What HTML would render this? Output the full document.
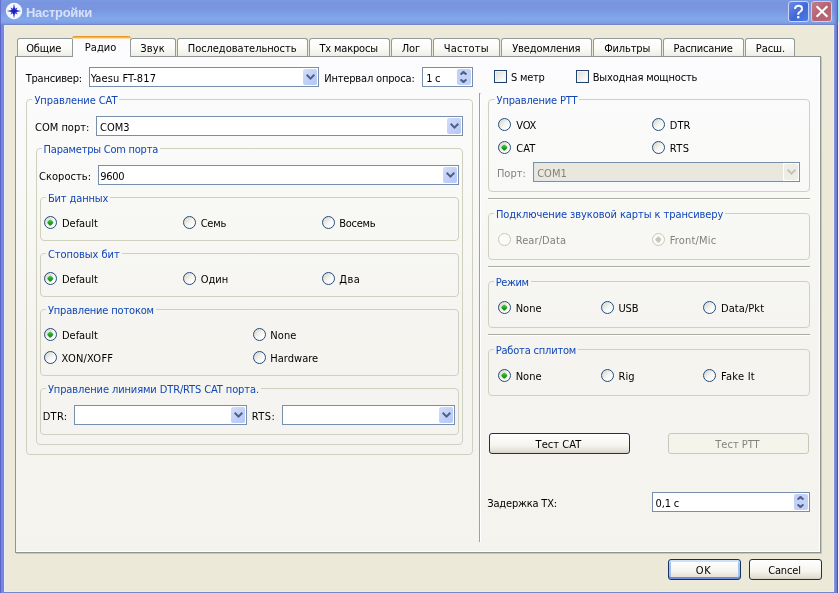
<!DOCTYPE html>
<html lang="ru"><head><meta charset="utf-8"><title>Настройки</title>
<style>
*{box-sizing:border-box;margin:0;padding:0}
html,body{width:839px;height:593px;overflow:hidden;background:#ece9d8}
body{position:relative;font-family:"DejaVu Sans Condensed", "Liberation Sans", sans-serif;font-size:11px;color:#000;line-height:13px}
.win{position:absolute;left:0;top:0;width:839px;height:593px;overflow:hidden;will-change:transform}
.a{position:absolute}
.t{position:absolute;white-space:nowrap;height:13px;line-height:13px}
.b{color:#1046b8;background:#f7f6f2;padding:0 2px}
.d{color:#83827b}
.title{position:absolute;left:0;top:0;width:838px;height:26px;background:linear-gradient(#7c9be3 0,#7995df 2px,#7a96e0 10px,#7e9fe6 14px,#82a8ea 19px,#80a2e8 22px,#7c98e0 23.5px,#7588c8 24px,#7588c8 25px,#e6eaf6 25px,#e6eaf6 26px)}
.title .cap{position:absolute;left:26px;top:5px;font:bold 13px 'Liberation Sans',sans-serif;color:#d8e1f7;line-height:16px;letter-spacing:-0.3px}
.lb{position:absolute;left:0;top:25px;width:5px;height:568px;background:linear-gradient(90deg,#5a64c8 0,#5a64c8 1px,#7284de 1px,#7789e2 3px,#7a8acc 3px,#7a8acc 4px,#e9ecf7 4px,#e9ecf7 5px)}
.rb{position:absolute;left:833px;top:25px;width:5px;height:568px;background:linear-gradient(90deg,#e9ecf7 0,#e9ecf7 1px,#8795da 1px,#8795da 2px,#7888e0 2px,#6c79d8 4px,#4a52a8 4px,#4a52a8 5px)}
.bb{position:absolute;left:1px;top:591px;width:836px;height:2px;background:linear-gradient(#e9ecf7 0,#e9ecf7 1px,#7686c8 1px,#7686c8 2px);border-left:3px solid #7789e2;border-right:3px solid #7280dc}
.e0{position:absolute;left:0;top:0;width:1px;height:25px;background:#6470d0}
.e1{position:absolute;left:833px;top:0;width:5px;height:25px;background:linear-gradient(90deg,rgba(106,112,208,0),rgba(106,112,208,.8) 80%,#5a64bc 80%)}
.edge{position:absolute;left:838px;top:0;width:1px;height:593px;background:linear-gradient(#9eeefc 0,#9eeefc 22px,#f6f6fa 22px)}
.pane{position:absolute;left:15px;top:56px;width:806px;height:497px;border:1px solid #8f9593;background:linear-gradient(#fcfcfe 0,#f8f8f5 30%,#f5f4f0 55%,#f4f3ee 100%);box-shadow:1px 1px 0 #c9c7ba,inset -1px -1px 0 #fff}
.tab{position:absolute;top:38px;height:18px;border:1px solid #919b9c;border-bottom:none;border-radius:3px 3px 0 0;background:linear-gradient(#ffffff,#fbfbf8 50%,#eeede5);line-height:17px}
.tab.sel{top:36px;height:21px;background:#fcfcfe;border-top:none;z-index:3}
.tab.sel:before{content:"";position:absolute;left:-1px;right:-1px;top:0;height:3px;background:linear-gradient(#e5922a 0,#e99a32 1px,#f4b048 1px,#f8bc58 2px,#fbd894 2px,#fde4b0 3px);border-radius:3px 3px 0 0}
.tab span{position:absolute;top:1px;white-space:nowrap}
.tab.sel span{top:3px}
.gb{position:absolute;border:1px solid #d0d0bf;border-radius:4px}
.hl{position:absolute;height:2px;border-top:1px solid #aeaca2;border-bottom:1px solid #fff}
.vl{position:absolute;width:2px;border-left:1px solid #a0a09a;border-right:1px solid #fff;border-top:1px solid #a0a09a}
.cb{position:absolute;height:20px;border:1px solid #788fab;background:#fff}
.cb .tx{position:absolute;left:4px;top:4px;white-space:nowrap}
.cb .btn{position:absolute;right:1px;top:1px;bottom:1px;width:14px;border-radius:2px;background:linear-gradient(135deg,#d3defb,#c3d1f8 50%,#b4c6f5)}
.cb .btn svg{position:absolute;left:2.5px;top:5px}
.cb.dis{background:#fff}
.cb.dis .fill{position:absolute;left:0;top:0;bottom:0;right:16px;background:#eae8dd;box-shadow:inset 1px 0 0 #dfe7f3,inset 0 1px 0 #dfe7f3,inset 0 -1px 0 #dfe7f3}
.cb.dis .tx{color:#83827b}
.cb.dis .btn{background:#eeede5}
.sp{position:absolute;height:20px;border:1px solid #788fab;background:#fff}
.sp .tx{position:absolute;left:4px;top:4px;white-space:nowrap}
.sp .u,.sp .dn{position:absolute;right:1px;width:14px;height:8px;background:#c3d1f8}
.sp .u{top:1px;border-radius:2px 2px 0 0}.sp .dn{bottom:1px;border-radius:0 0 2px 2px}
.sp .u svg{position:absolute;left:3px;top:2px}.sp .dn svg{position:absolute;left:3px;top:2px}
.rd{position:absolute;width:13px;height:13px;border-radius:50%;border:1px solid #234c7c;background:linear-gradient(135deg,#d6d5cc 5%,#f4f4f0 50%,#ffffff 80%)}
.rd.on:after{content:"";position:absolute;left:3.2px;top:3.2px;width:4.6px;height:4.6px;border-radius:30%;transform:rotate(45deg);background:linear-gradient(135deg,#55d551,#21a121 55%,#1a8a1a)}
.rd.dis{border-color:#c9c7ba;background:#fbfbf8}
.rd.dis.on:after{background:#c9c7ba}
.ck{position:absolute;width:13px;height:13px;border:1px solid #1f436c;background:linear-gradient(135deg,#dcdbd3,#ffffff 85%);box-shadow:inset 0 0 0 1px #f0f4fb}
.pb{position:absolute;height:21px;border:1px solid #12345f;border-radius:3px;background:linear-gradient(#ffffff,#f5f4ee 60%,#e3e1d4 90%,#d6d0c5);text-align:center;line-height:19px;padding:1px 2px 0 0}
.pb.def{box-shadow:inset 0 -2px 0 #6d8ddc,inset 0 2px 0 #cfe0fb,inset 2px 0 0 #a6c0ef,inset -2px 0 0 #a6c0ef}
.pb.dis{border-color:#c9c7ba;background:#f5f4ea;color:#83827b}
</style></head>
<body>
<div class="win">
<div class="title"><svg class="a" style="left:5px;top:2px" width="18" height="18" viewBox="0 0 18 18"><circle cx="9" cy="9" r="8.2" fill="#f6f8ff"/><path d="M5.4 5.4 L9 7.0 L12.6 5.4 L11 9 L12.6 12.6 L9 11 L5.4 12.6 L7 9 Z" fill="#4048e0"/><path d="M9 1.8 L10.2 7.8 L16.2 9 L10.2 10.2 L9 16.2 L7.8 10.2 L1.8 9 L7.8 7.8 Z" fill="#1c22bc"/></svg><span class="cap">Настройки</span><div class="a" style="left:788px;top:1px;width:21px;height:21px;border:1px solid #c9d5f6;border-radius:3px;background:linear-gradient(135deg,#6c8ce4,#3f67d8 55%,#4f7de8)"><span class="a" style="left:0;top:0;width:19px;text-align:center;font:18px 'Liberation Sans',sans-serif;line-height:20px;color:#fff;-webkit-text-stroke:0.4px #fff">?</span></div><div class="a" style="left:811px;top:1px;width:21px;height:21px;border:1px solid #dcc8da;border-radius:3px;background:linear-gradient(135deg,#c27c8a,#b4616f 55%,#ba6978)"><svg class="a" style="left:2.5px;top:3px" width="14" height="13" viewBox="0 0 14 13"><path d="M1.6 1.2 L12.4 11.8 M12.4 1.2 L1.6 11.8" stroke="#fff" stroke-width="2.1"/></svg></div></div>
<div class="lb"></div><div class="rb"></div><div class="bb"></div><div class="edge"></div><div class="e0"></div><div class="e1"></div>
<div class="pane"></div>
<div class="tab" style="left:17px;width:57px"><span style="left:8.2px;letter-spacing:-0.15px;">Общие</span></div>
<div class="tab sel" style="left:72px;width:59px"><span style="left:11.8px;letter-spacing:0.03px;">Радио</span></div>
<div class="tab" style="left:130px;width:46px"><span style="left:9.2px;letter-spacing:0.15px;">Звук</span></div>
<div class="tab" style="left:177px;width:131px"><span style="left:9.8px;letter-spacing:-0.06px;">Последовательность</span></div>
<div class="tab" style="left:309px;width:81px"><span style="left:9.5px;letter-spacing:-0.18px;">Tx макросы</span></div>
<div class="tab" style="left:391px;width:41px"><span style="left:9.8px;letter-spacing:-0.17px;">Лог</span></div>
<div class="tab" style="left:433px;width:67px"><span style="left:9.8px;letter-spacing:0.19px;">Частоты</span></div>
<div class="tab" style="left:501px;width:91px"><span style="left:10.2px;letter-spacing:-0.12px;">Уведомления</span></div>
<div class="tab" style="left:593px;width:69px"><span style="left:10.2px;letter-spacing:-0.14px;">Фильтры</span></div>
<div class="tab" style="left:663px;width:81px"><span style="left:9.5px;letter-spacing:-0.16px;">Расписание</span></div>
<div class="tab" style="left:745px;width:50px"><span style="left:9.8px;letter-spacing:-0.05px;">Расш.</span></div>
<span class="t" style="left:25.7px;top:72px;letter-spacing:-0.2px;">Трансивер:</span>
<div class="cb" style="left:89px;top:67px;width:230px;height:20px"><span class="tx" style="left:0.7px;letter-spacing:0.09px;">Yaesu FT-817</span><span class="btn"><svg width="9" height="6" viewBox="0 0 9 6"><path d="M0.7 0.8 L4.5 4.6 L8.3 0.8" fill="none" stroke="#4d6185" stroke-width="2"/></svg></span></div>
<span class="t" style="left:324.2px;top:72px;letter-spacing:-0.17px;">Интервал опроса:</span>
<div class="sp" style="left:422px;top:67px;width:51px;height:20px"><span class="tx" style="left:3.3px;letter-spacing:-0.36px;">1 с</span><span class="u"><svg width="7" height="4" viewBox="0 0 7 4"><path d="M0.6 3.6 L3.5 0.9 L6.4 3.6" fill="none" stroke="#4d6185" stroke-width="2"/></svg></span><span class="dn"><svg width="7" height="4" viewBox="0 0 7 4"><path d="M0.6 0.4 L3.5 3.1 L6.4 0.4" fill="none" stroke="#4d6185" stroke-width="2"/></svg></span></div>
<span class="ck" style="left:494px;top:70px"></span><span class="t" style="left:511px;top:71px;letter-spacing:-0.24px;">S метр</span>
<span class="ck" style="left:576px;top:70px"></span><span class="t" style="left:592.7px;top:71px;letter-spacing:-0.17px;">Выходная мощность</span>
<div class="vl" style="left:479px;top:93px;height:449px"></div>
<div class="gb" style="left:26px;top:99px;width:447px;height:356px"></div><span class="t b" style="left:32.4px;top:94px;background:#fbfbfb;letter-spacing:-0.08px;">Управление CAT</span>
<span class="t" style="left:35px;top:121px;">COM порт:</span>
<div class="cb" style="left:96px;top:116px;width:367px;height:20px"><span class="tx" style="left:3px;">COM3</span><span class="btn"><svg width="9" height="6" viewBox="0 0 9 6"><path d="M0.7 0.8 L4.5 4.6 L8.3 0.8" fill="none" stroke="#4d6185" stroke-width="2"/></svg></span></div>
<div class="gb" style="left:36px;top:148px;width:427px;height:297px"></div><span class="t b" style="left:41.6px;top:143px;background:#fafaf8;letter-spacing:-0.23px;">Параметры Com порта</span>
<span class="t" style="left:39px;top:170px;letter-spacing:0.04px;">Скорость:</span>
<div class="cb" style="left:98px;top:165px;width:361px;height:20px"><span class="tx" style="left:1.3px;letter-spacing:-0.3px;">9600</span><span class="btn"><svg width="9" height="6" viewBox="0 0 9 6"><path d="M0.7 0.8 L4.5 4.6 L8.3 0.8" fill="none" stroke="#4d6185" stroke-width="2"/></svg></span></div>
<div class="gb" style="left:40px;top:197px;width:419px;height:44px"></div><span class="t b" style="left:45.9px;top:192px;background:#f8f8f6;letter-spacing:-0.13px;">Бит данных</span>
<span class="rd on" style="left:44px;top:216px"></span><span class="t" style="left:62px;top:217px;letter-spacing:-0.04px;">Default</span>
<span class="rd" style="left:183px;top:216px"></span><span class="t" style="left:200.7px;top:217px;letter-spacing:-0.25px;">Семь</span>
<span class="rd" style="left:322px;top:216px"></span><span class="t" style="left:339.3px;top:217px;letter-spacing:-0.3px;">Восемь</span>
<div class="gb" style="left:40px;top:253px;width:419px;height:44px"></div><span class="t b" style="left:45.9px;top:248px;background:#f7f6f3;letter-spacing:-0.03px;">Стоповых бит</span>
<span class="rd on" style="left:44px;top:272px"></span><span class="t" style="left:62px;top:273px;letter-spacing:-0.04px;">Default</span>
<span class="rd" style="left:183px;top:272px"></span><span class="t" style="left:200.7px;top:273px;">Один</span>
<span class="rd" style="left:322px;top:272px"></span><span class="t" style="left:339.3px;top:273px;letter-spacing:0.45px;">Два</span>
<div class="gb" style="left:40px;top:309px;width:419px;height:67px"></div><span class="t b" style="left:45.9px;top:304px;background:#f5f5f1;letter-spacing:-0.17px;">Управление потоком</span>
<span class="rd on" style="left:44px;top:328px"></span><span class="t" style="left:62px;top:329px;letter-spacing:-0.04px;">Default</span>
<span class="rd" style="left:253px;top:328px"></span><span class="t" style="left:270.2px;top:329px;letter-spacing:0.14px;">None</span>
<span class="rd" style="left:44px;top:351px"></span><span class="t" style="left:61.6px;top:352px;letter-spacing:0.22px;">XON/XOFF</span>
<span class="rd" style="left:253px;top:351px"></span><span class="t" style="left:270.2px;top:352px;letter-spacing:0.04px;">Hardware</span>
<div class="gb" style="left:40px;top:388px;width:419px;height:47px"></div><span class="t b" style="left:45.9px;top:383px;background:#f5f4ef;letter-spacing:-0.11px;">Управление линиями DTR/RTS CAT порта.</span>
<span class="t" style="left:42.7px;top:410px;letter-spacing:0.29px;">DTR:</span>
<div class="cb" style="left:74px;top:405px;width:173px;height:20px"><span class="tx" style=""></span><span class="btn"><svg width="9" height="6" viewBox="0 0 9 6"><path d="M0.7 0.8 L4.5 4.6 L8.3 0.8" fill="none" stroke="#4d6185" stroke-width="2"/></svg></span></div>
<span class="t" style="left:251.8px;top:410px;letter-spacing:0.41px;">RTS:</span>
<div class="cb" style="left:282px;top:405px;width:173px;height:20px"><span class="tx" style=""></span><span class="btn"><svg width="9" height="6" viewBox="0 0 9 6"><path d="M0.7 0.8 L4.5 4.6 L8.3 0.8" fill="none" stroke="#4d6185" stroke-width="2"/></svg></span></div>
<div class="gb" style="left:488px;top:99px;width:322px;height:93px"></div><span class="t b" style="left:494.6px;top:94px;background:#fbfbfb;letter-spacing:-0.17px;">Управление PTT</span>
<span class="rd" style="left:498px;top:118px"></span><span class="t" style="left:516.3px;top:119px;letter-spacing:-0.18px;">VOX</span>
<span class="rd" style="left:652px;top:118px"></span><span class="t" style="left:669.7px;top:119px;letter-spacing:0.12px;">DTR</span>
<span class="rd on" style="left:498px;top:141px"></span><span class="t" style="left:516.3px;top:142px;letter-spacing:0.04px;">CAT</span>
<span class="rd" style="left:652px;top:141px"></span><span class="t" style="left:669.7px;top:142px;letter-spacing:0.46px;">RTS</span>
<span class="t d" style="left:496.9px;top:167px;letter-spacing:0.04px;">Порт:</span>
<div class="cb dis" style="left:533px;top:162px;width:267px;height:20px"><span class="fill"></span><span class="tx" style="left:3.2px;">COM1</span><span class="btn"><svg width="9" height="6" viewBox="0 0 9 6"><path d="M0.7 0.8 L4.5 4.6 L8.3 0.8" fill="none" stroke="#c4c2b6" stroke-width="2"/></svg></span></div>
<div class="hl" style="left:488px;top:198px;width:322px"></div>
<div class="gb" style="left:488px;top:213px;width:322px;height:47px"></div><span class="t b" style="left:493.9px;top:208px;background:#f8f8f5;letter-spacing:-0.07px;">Подключение звуковой карты к трансиверу</span>
<span class="rd dis" style="left:498px;top:233px"></span><span class="t d" style="left:515.7px;top:234px;letter-spacing:0.1px;">Rear/Data</span>
<span class="rd on dis" style="left:652px;top:233px"></span><span class="t d" style="left:669.7px;top:234px;letter-spacing:0.18px;">Front/Mic</span>
<div class="hl" style="left:488px;top:266px;width:322px"></div>
<div class="gb" style="left:488px;top:281px;width:322px;height:47px"></div><span class="t b" style="left:493.7px;top:276px;background:#f6f6f2;letter-spacing:-0.38px;">Режим</span>
<span class="rd on" style="left:498px;top:301px"></span><span class="t" style="left:515.7px;top:302px;letter-spacing:0.02px;">None</span>
<span class="rd" style="left:601px;top:301px"></span><span class="t" style="left:618.6px;top:302px;letter-spacing:-0.24px;">USB</span>
<span class="rd" style="left:703px;top:301px"></span><span class="t" style="left:721px;top:302px;letter-spacing:0.07px;">Data/Pkt</span>
<div class="hl" style="left:488px;top:334px;width:322px"></div>
<div class="gb" style="left:488px;top:349px;width:322px;height:47px"></div><span class="t b" style="left:493.7px;top:344px;background:#f5f4f0;letter-spacing:-0.19px;">Работа сплитом</span>
<span class="rd on" style="left:498px;top:369px"></span><span class="t" style="left:515.7px;top:370px;letter-spacing:0.02px;">None</span>
<span class="rd" style="left:601px;top:369px"></span><span class="t" style="left:618.6px;top:370px;letter-spacing:-0.04px;">Rig</span>
<span class="rd" style="left:703px;top:369px"></span><span class="t" style="left:721px;top:370px;letter-spacing:0.27px;">Fake It</span>
<div class="pb" style="left:489px;top:433px;width:141px;letter-spacing:0.07px;">Тест CAT</div>
<div class="pb dis" style="left:668px;top:433px;width:141px;">Тест PTT</div>
<span class="t" style="left:487.3px;top:497px;letter-spacing:-0.19px;">Задержка TX:</span>
<div class="sp" style="left:652px;top:492px;width:158px;height:20px"><span class="tx" style="left:2.6px;letter-spacing:-0.15px;">0,1 с</span><span class="u"><svg width="7" height="4" viewBox="0 0 7 4"><path d="M0.6 3.6 L3.5 0.9 L6.4 3.6" fill="none" stroke="#4d6185" stroke-width="2"/></svg></span><span class="dn"><svg width="7" height="4" viewBox="0 0 7 4"><path d="M0.6 0.4 L3.5 3.1 L6.4 0.4" fill="none" stroke="#4d6185" stroke-width="2"/></svg></span></div>
<div class="pb def" style="left:668px;top:559px;width:73px;letter-spacing:0.51px;">OK</div>
<div class="pb" style="left:749px;top:559px;width:73px;letter-spacing:-0.14px;">Cancel</div>
</div>
</body></html>
